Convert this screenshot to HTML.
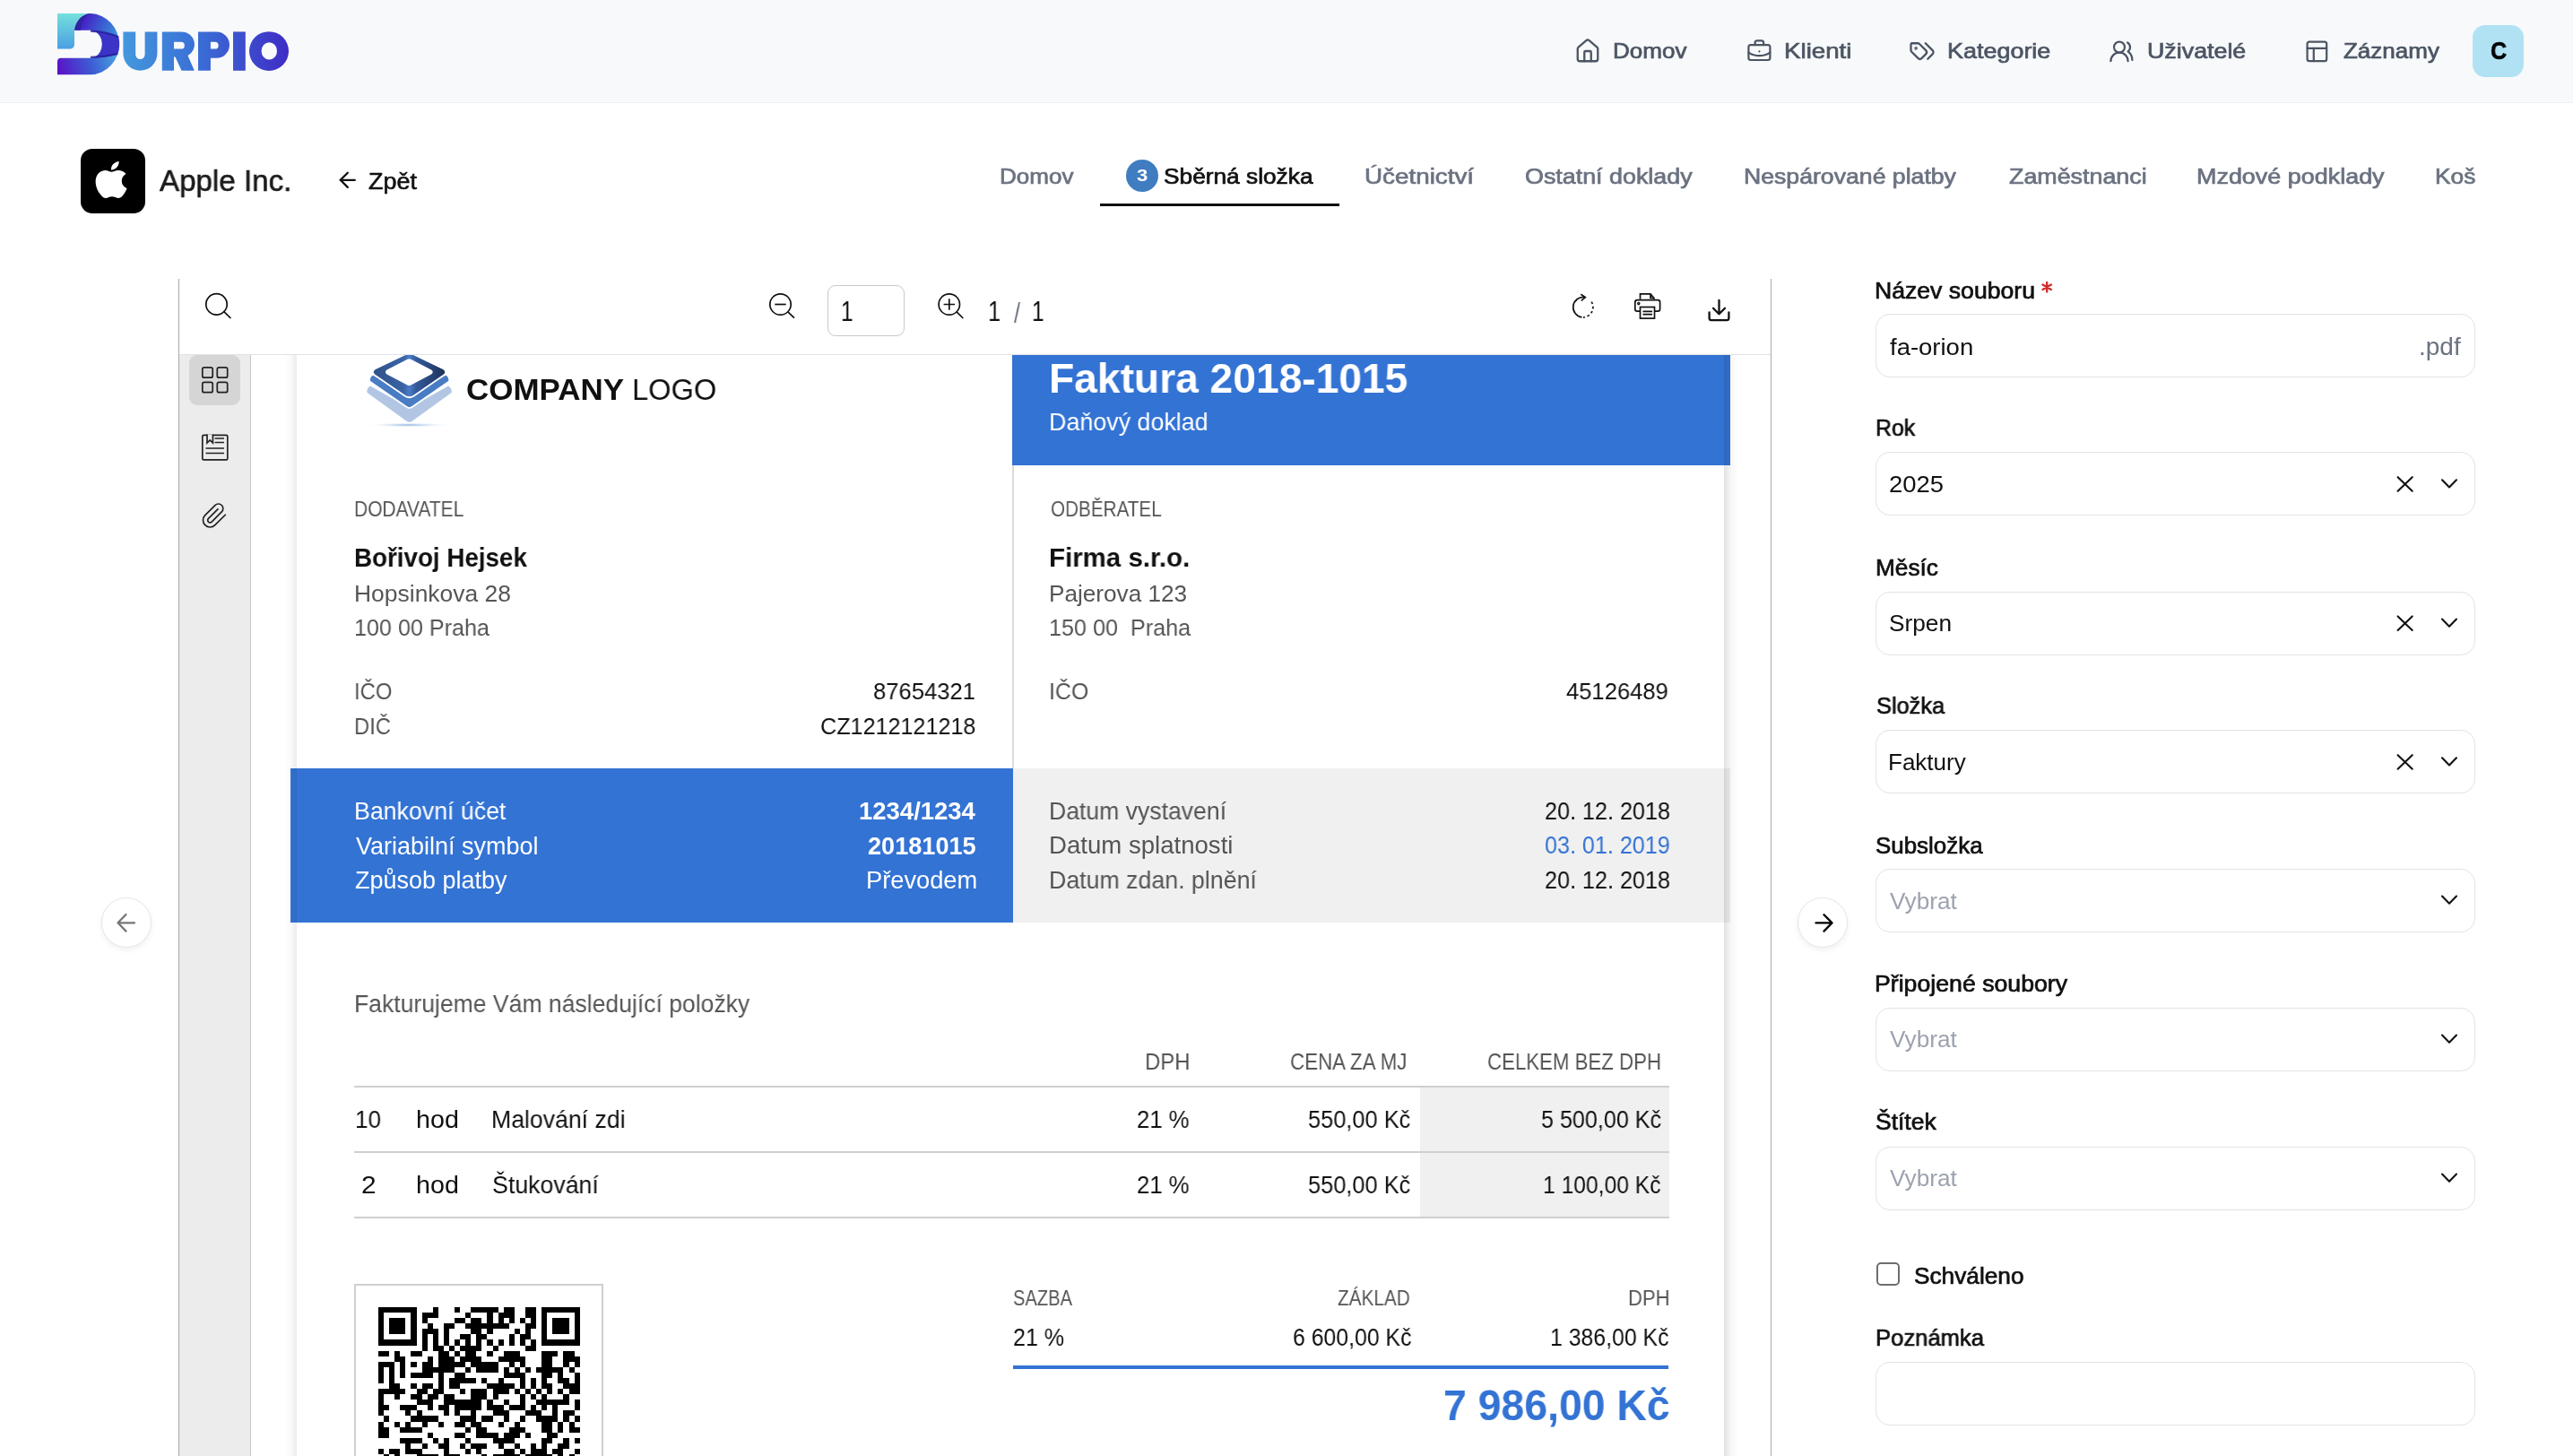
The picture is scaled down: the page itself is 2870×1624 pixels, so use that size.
<!DOCTYPE html>
<html lang="cs">
<head>
<meta charset="utf-8">
<title>Durpio – Sběrná složka</title>
<style>
html,body{margin:0;padding:0;}
body{width:2870px;height:1624px;position:relative;overflow:hidden;background:#fff;font-family:"Liberation Sans",sans-serif;}
.t{position:absolute;white-space:pre;transform-origin:0 0;z-index:4;will-change:transform;}
.abs{position:absolute;}
header.top{position:absolute;left:0;top:0;width:2870px;height:115px;background:#f8f9fb;border-bottom:1px solid #eef0f3;box-sizing:border-box;}
.avatar{position:absolute;left:2758px;top:28px;width:57px;height:58px;border-radius:14px;background:#b1e2f4;}
.applebox{position:absolute;left:90px;top:166px;width:72px;height:72px;border-radius:13px;background:#000;}
.badge{position:absolute;left:1256px;top:178px;width:36px;height:36px;border-radius:50%;background:#3f7cc0;}
.underline{position:absolute;left:1227px;top:227px;width:267px;height:3px;background:#111;}
.viewer{position:absolute;left:199px;top:311px;width:1777px;height:1313px;border-left:1px solid #a9a9a9;border-right:1px solid #a9a9a9;box-sizing:border-box;background:#fff;overflow:hidden;}
.toolbar{position:absolute;left:200px;top:311px;width:1775px;height:85px;background:#fff;border-bottom:1px solid #dfe2e7;box-sizing:border-box;}
.pinput{position:absolute;left:923px;top:318px;width:86px;height:57px;border:1px solid #c9c9c9;border-radius:9px;box-sizing:border-box;background:#fff;}
.sidebar{position:absolute;left:200px;top:396px;width:80px;height:1228px;background:#ececec;border-right:1px solid #c6c6c6;box-sizing:border-box;}
.sbactive{position:absolute;left:211px;top:396px;width:57px;height:56px;border-radius:9px;background:#d5d5d5;}
.page{position:absolute;left:331px;top:396px;width:1592px;height:1228px;background:#fff;}
.shl{position:absolute;left:317px;top:396px;width:14px;height:1228px;background:linear-gradient(to right,rgba(0,0,0,0),rgba(0,0,0,0.02) 50%,rgba(0,0,0,0.075));}
.shr{position:absolute;left:1923px;top:396px;width:16px;height:1228px;background:linear-gradient(to right,rgba(0,0,0,0.115),rgba(0,0,0,0.03) 50%,rgba(0,0,0,0));}
.bluehead{position:absolute;left:1129px;top:396px;width:801px;height:123px;background:#3373d4;}
.bankbox{position:absolute;left:324px;top:857px;width:806px;height:172px;background:#3373d4;}
.datebox{position:absolute;left:1130px;top:857px;width:800px;height:172px;background:#f0f0f0;}
.coldiv{position:absolute;left:1129px;top:519px;width:2px;height:338px;background:#dcdcdc;}
.tline{position:absolute;left:395px;width:1467px;height:2px;background:#cfcfcf;}
.tcell{position:absolute;left:1584px;width:278px;background:#f0f0f0;}
.qrframe{position:absolute;left:395px;top:1432px;width:278px;height:300px;border:2px solid #cfcfcf;box-sizing:border-box;background:#fff;}
.sumline{position:absolute;left:1130px;top:1523px;width:731px;height:4px;background:#3373d4;}
.navcirc{position:absolute;width:56px;height:56px;border-radius:50%;background:#fff;border:1px solid #e6e6e6;box-sizing:border-box;box-shadow:0 3px 6px rgba(0,0,0,0.06);}
.fld{position:absolute;left:2092px;width:669px;height:71px;border:1.5px solid #e1e3e7;border-radius:16px;box-sizing:border-box;background:#fff;}
.chk{position:absolute;left:2093px;top:1408px;width:26px;height:26px;border:2px solid #6e6e6e;border-radius:5px;box-sizing:border-box;background:#fff;}
svg{position:absolute;overflow:visible;}
</style>
</head>
<body>
<header class="top">
  <!-- DURPIO logo -->
  <svg style="left:0;top:0" width="340" height="100" viewBox="0 0 340 100">
    <defs>
      <linearGradient id="lg_txt" gradientUnits="userSpaceOnUse" x1="137" y1="0" x2="322" y2="0">
        <stop offset="0" stop-color="#4398dd"/><stop offset="0.45" stop-color="#3a6fd6"/><stop offset="1" stop-color="#3f2cc5"/>
      </linearGradient>
      <linearGradient id="lg_stem" gradientUnits="userSpaceOnUse" x1="0" y1="15" x2="0" y2="55">
        <stop offset="0" stop-color="#74e0dc"/><stop offset="1" stop-color="#4a9ee2"/>
      </linearGradient>
      <linearGradient id="lg_arc" gradientUnits="userSpaceOnUse" x1="90" y1="22" x2="132" y2="40">
        <stop offset="0" stop-color="#4818c6"/><stop offset="0.55" stop-color="#3a5fd2"/><stop offset="1" stop-color="#3f94dc"/>
      </linearGradient>
      <linearGradient id="lg_dbot" gradientUnits="userSpaceOnUse" x1="64" y1="80" x2="132" y2="60">
        <stop offset="0" stop-color="#5a10c6"/><stop offset="0.55" stop-color="#3c5ed4"/><stop offset="1" stop-color="#4aa8e2"/>
      </linearGradient>
    </defs>
    <path fill="url(#lg_stem)" d="M64 15 H101 C92 16 85 22 83 33.7 V49.6 A5 5 0 0 1 78 54.6 H64 Z"/>
    <path fill="url(#lg_arc)" d="M101 15 A33 34.2 0 0 1 132.9 49.5 H113.7 A13 15.5 0 0 0 101 33.7 H83 C85 22 92 16 101 15 Z"/>
    <path fill="#2b279c" opacity="0.9" d="M83 33.7 C85 22 92 16 101 15 C95 18 90.5 25 90 33.7 Z"/>
    <path fill="url(#lg_dbot)" d="M68 64.7 H101 A13 15.5 0 0 0 113.7 49.5 H132.9 A33 33.8 0 0 1 101 83.3 H64 V68.7 A4 4 0 0 1 68 64.7 Z"/>
    <path fill="#3b34c6" d="M101 33.7 C113 34.2 124 36.5 132.1 40.6 A33 34 0 0 1 131.2 60.8 C122 63.2 112 64.4 101 64.7 A13 15.5 0 0 0 101 33.7 Z"/>
    <path fill="none" stroke="#28219a" stroke-width="2.2" opacity="0.85" d="M101 34.6 C113 35.1 124 37.4 132.1 41.5 M101 63.8 C112 63.5 122 62.3 131.2 59.9"/>
    <g fill="url(#lg_txt)">
      <path d="M137.4 35.4 H151.2 V60.7 A5.2 5.2 0 0 0 161.6 60.7 V35.4 H175.4 V59.8 A19 19 0 0 1 137.4 59.8 Z"/>
      <path fill-rule="evenodd" d="M180.8 35.4 H203 A14 14.1 0 0 1 209.5 62 L216.8 78.8 H202.5 L195.5 63.6 H194 V78.8 H180.8 Z M194 46.7 H201.9 A3.95 3.95 0 0 1 201.9 54.6 H194 Z"/>
      <path fill-rule="evenodd" d="M221 35.4 H241.5 A14.5 14.65 0 0 1 241.5 64.7 H234.9 V78.8 H221 Z M234.9 46.7 H239.7 A3.95 3.95 0 0 1 239.7 54.6 H234.9 Z"/>
      <rect x="260" y="35.4" width="13.8" height="43.4"/>
      <path fill-rule="evenodd" d="M278 57.1 A22 21.9 0 1 0 322 57.1 A22 21.9 0 1 0 278 57.1 Z M291.6 56.9 A8.7 9.6 0 1 0 309 56.9 A8.7 9.6 0 1 0 291.6 56.9 Z"/>
    </g>
  </svg>
  <nav>
    <svg style="left:1755.5px;top:41.8px" width="30" height="30" viewBox="0 0 24 24" fill="none" stroke="#4b5563" stroke-width="1.85" stroke-linecap="round" stroke-linejoin="round"><path d="M15 21v-8a1 1 0 0 0-1-1h-4a1 1 0 0 0-1 1v8"/><path d="M3 10a2 2 0 0 1 .709-1.528l7-5.999a2 2 0 0 1 2.582 0l7 5.999A2 2 0 0 1 21 10v9a2 2 0 0 1-2 2H5a2 2 0 0 1-2-2z"/></svg>
    <svg style="left:1947.9px;top:43.3px" width="28.8" height="28.8" viewBox="0 0 24 24" fill="none" stroke="#4b5563" stroke-width="1.85" stroke-linecap="round" stroke-linejoin="round"><path d="M12 12h.01"/><path d="M16 6V4a2 2 0 0 0-2-2h-4a2 2 0 0 0-2 2v2"/><path d="M22 13a18.15 18.15 0 0 1-20 0"/><rect width="20" height="14" x="2" y="6" rx="2"/></svg>
    <svg style="left:2129.4px;top:42px" width="30" height="30" viewBox="0 0 24 24" fill="none" stroke="#4b5563" stroke-width="1.85" stroke-linecap="round" stroke-linejoin="round"><path d="m15 5 6.3 6.3a2.4 2.4 0 0 1 0 3.4L17 19"/><path d="M9.586 5.586A2 2 0 0 0 8.172 5H3a1 1 0 0 0-1 1v5.172a2 2 0 0 0 .586 1.414L8.29 18.29a2.426 2.426 0 0 0 3.42 0l3.58-3.58a2.426 2.426 0 0 0 0-3.42z"/><circle cx="6.5" cy="9.5" r=".5" fill="#4b5563"/></svg>
    <svg style="left:2352px;top:42.5px" width="28.8" height="28.8" viewBox="0 0 24 24" fill="none" stroke="#4b5563" stroke-width="1.85" stroke-linecap="round" stroke-linejoin="round"><path d="M18 21a8 8 0 0 0-16 0"/><circle cx="10" cy="8" r="5"/><path d="M22 20c0-3.37-2-6.5-4-8a5 5 0 0 0-.45-8.3"/></svg>
    <svg style="left:2570px;top:42.9px" width="28.8" height="28.8" viewBox="0 0 24 24" fill="none" stroke="#4b5563" stroke-width="1.85" stroke-linecap="round" stroke-linejoin="round"><rect width="18" height="18" x="3" y="3" rx="2"/><path d="M3 9h18"/><path d="M9 21V9"/></svg>
    <div class="avatar"></div>
  </nav>
</header>

<section class="clientbar">
  <div class="applebox"></div>
  <svg style="left:108.3px;top:180px" width="31.8" height="41" viewBox="3 0 17.8 24" preserveAspectRatio="none"><path fill="#fff" d="M12.152 6.896c-.948 0-2.415-1.078-3.96-1.04-2.04.027-3.91 1.183-4.961 3.014-2.117 3.675-.546 9.103 1.519 12.09 1.013 1.454 2.208 3.09 3.792 3.039 1.52-.065 2.09-.987 3.935-.987 1.831 0 2.35.987 3.96.948 1.637-.026 2.676-1.48 3.676-2.948 1.156-1.688 1.636-3.325 1.662-3.415-.039-.013-3.182-1.221-3.22-4.857-.026-3.04 2.48-4.494 2.597-4.559-1.429-2.09-3.623-2.324-4.39-2.376-2-.156-3.675 1.09-4.61 1.09zM15.53 3.83c.843-1.012 1.4-2.427 1.245-3.830-1.207.052-2.662.805-3.532 1.818-.78.896-1.454 2.338-1.273 3.714 1.338.104 2.715-.688 3.559-1.701"/></svg>
  <svg style="left:374.2px;top:187.2px" width="27.6" height="27.6" viewBox="0 0 24 24" fill="none" stroke="#111" stroke-width="2" stroke-linecap="round" stroke-linejoin="round"><path d="m12 19-7-7 7-7"/><path d="M19 12H5"/></svg>
  <div class="badge"></div>
  <div class="underline"></div>
</section>

<main>
  <div class="viewer"></div>
  <div class="toolbar" style="z-index:2"></div>
  <!-- toolbar icons -->
  <svg style="left:0;top:0;z-index:3" width="2870" height="400" viewBox="0 0 2870 400" fill="none" stroke="#111" stroke-width="1.7" stroke-linecap="butt">
    <circle cx="241.5" cy="339.4" r="11.7"/><path d="M249.8 347.7 L257.4 355"/>
    <circle cx="870.5" cy="339.5" r="11.7"/><path d="M878.8 347.8 L886 354.7"/><path d="M864.3 339.5 H876.7"/>
    <circle cx="1058.8" cy="339.5" r="11.7"/><path d="M1067.1 347.8 L1074.3 355"/><path d="M1052.6 339.5 H1065 M1058.8 333.3 V345.7"/>
    <path d="M1764.5 353.9 A11.3 11.3 0 0 1 1767.5 331.5"/>
    <path d="M1775.2 336.6 A11.3 11.3 0 0 1 1766 353.9" stroke-dasharray="2.6 2.8"/>
    <path d="M1763.3 328.2 L1768.3 331.6 L1763.8 335.4" stroke-linejoin="miter"/>
    <path d="M1829.5 333.8 V327.8 H1841 L1845 332.5 V333.8 M1841 327.8 V332.5 H1845"/>
    <rect x="1823.8" y="334.6" width="27.8" height="12.6" rx="2.4"/>
    <circle cx="1827.8" cy="338.6" r="1.1" stroke-width="1.4"/>
    <rect x="1829.5" y="342.5" width="16" height="12.6" fill="#fff"/>
    <path d="M1832.5 347.3 H1843 M1832.5 350.6 H1843"/>
    <path d="M1917.5 335 V350 M1911 343.7 L1917.5 350.2 L1924 343.7 M1906.6 348.5 V354.8 A2.4 2.4 0 0 0 1909 357.2 H1926 A2.4 2.4 0 0 0 1928.4 354.8 V348.5" stroke-width="2.3" stroke-linecap="round" stroke-linejoin="round"/>
  </svg>
  <div class="pinput" style="z-index:3"></div>
  <div class="sidebar"></div>
  <div class="sbactive"></div>
  <svg style="left:0;top:0" width="300" height="600" viewBox="0 0 300 600" fill="none" stroke="#222" stroke-width="1.7">
    <rect x="225.8" y="409.8" width="11.4" height="11.4" rx="2"/><rect x="242.3" y="409.8" width="11.4" height="11.4" rx="2"/>
    <rect x="225.8" y="426.3" width="11.4" height="11.4" rx="2"/><rect x="242.3" y="426.3" width="11.4" height="11.4" rx="2"/>
    <rect x="225.8" y="485.3" width="28" height="27.6" rx="1.5"/>
    <path d="M231 484.5 V494 L234.2 491 L237.4 494 V484.5" fill="#ececec"/>
    <path d="M239.5 489 H250 M239.5 493.5 H250 M229.5 500 H250 M229.5 505.5 H250" stroke-width="1.5"/>
    <path transform="translate(223.9 559.4) scale(1.3)" stroke-width="1.3" d="m21.44 11.05-9.19 9.19a6 6 0 0 1-8.49-8.49l8.57-8.57A4 4 0 1 1 18 8.84l-8.59 8.57a2 2 0 0 1-2.83-2.83l8.49-8.48"/>
  </svg>

  <div class="page"></div>
  <!-- company logo -->
  <svg style="left:0;top:0" width="600" height="500" viewBox="0 0 600 500">
    <defs>
      <linearGradient id="lg_top" x1="0" y1="0" x2="1" y2="0"><stop offset="0" stop-color="#2f5088"/><stop offset="0.42" stop-color="#3a64a6"/><stop offset="0.5" stop-color="#4a7cc6"/><stop offset="0.6" stop-color="#34599a"/><stop offset="1" stop-color="#1c3158"/></linearGradient>
      <radialGradient id="lg_sh" cx="0.5" cy="0.5" r="0.5"><stop offset="0" stop-color="#6a9ad8" stop-opacity="0.8"/><stop offset="1" stop-color="#fff" stop-opacity="0"/></radialGradient>
    </defs>
    <ellipse cx="456" cy="474" rx="48" ry="2.6" fill="url(#lg_sh)"/>
    <path fill="#b2c6e4" d="M409.6 438 Q408.6 433 413 430.5 L456.6 455 L500 430.5 Q504.6 433 503.6 438 L460 469.5 Q456.6 472 453.2 469.5 Z"/>
    <path fill="#4a7cc4" stroke="#fff" stroke-width="1.8" d="M412 425.3 Q411.4 420 416 417.5 L456.6 441 L497.2 417.5 Q501.8 420 501.2 425.3 L460 453.8 Q456.6 456.3 453.2 453.8 Z"/>
    <path fill="url(#lg_top)" stroke="#fff" stroke-width="1.8" fill-rule="evenodd" d="M418 411.5 L452 395.2 Q456.6 393 461.2 395.2 L495 411.5 Q499.5 415 495 418.5 L461 442 Q456.6 444.5 452.2 442 L418 418.5 Q413.5 415 418 411.5 Z M432 413.2 Q429.5 415 432 416.8 L454.8 428.6 Q456.4 429.4 458 428.6 L480.6 416.8 Q483.1 415 480.6 413.2 L458 401.6 Q456.4 400.8 454.8 401.6 Z"/>
  </svg>

  <div class="bluehead"></div>
  <div class="coldiv"></div>
  <div class="bankbox"></div>
    <div class="datebox"></div>
    
  <div class="tline" style="top:1211px"></div>
  <div class="tcell" style="top:1213px;height:71px"></div>
  <div class="tline" style="top:1284px"></div>
  <div class="tcell" style="top:1286px;height:71px"></div>
  <div class="tline" style="top:1357px"></div>

  <div class="qrframe"></div>
  <svg style="left:421.6px;top:1457.7px" width="224.7" height="224.7" viewBox="0 0 37 37" shape-rendering="crispEdges"><path fill="#000" d="M0 0h7v1h-7zM10 0h1v1h-1zM14 0h1v1h-1zM17 0h5v1h-5zM23 0h2v1h-2zM27 0h2v1h-2zM30 0h7v1h-7zM0 1h1v1h-1zM6 1h1v1h-1zM8 1h3v1h-3zM16 1h1v1h-1zM20 1h1v1h-1zM22 1h3v1h-3zM27 1h2v1h-2zM30 1h1v1h-1zM36 1h1v1h-1zM0 2h1v1h-1zM2 2h3v1h-3zM6 2h1v1h-1zM8 2h1v1h-1zM14 2h2v1h-2zM17 2h2v1h-2zM20 2h1v1h-1zM22 2h1v1h-1zM24 2h1v1h-1zM26 2h1v1h-1zM28 2h1v1h-1zM30 2h1v1h-1zM32 2h3v1h-3zM36 2h1v1h-1zM0 3h1v1h-1zM2 3h3v1h-3zM6 3h1v1h-1zM9 3h1v1h-1zM12 3h2v1h-2zM16 3h8v1h-8zM27 3h2v1h-2zM30 3h1v1h-1zM32 3h3v1h-3zM36 3h1v1h-1zM0 4h1v1h-1zM2 4h3v1h-3zM6 4h1v1h-1zM8 4h3v1h-3zM12 4h1v1h-1zM17 4h2v1h-2zM20 4h1v1h-1zM25 4h1v1h-1zM27 4h1v1h-1zM30 4h1v1h-1zM32 4h3v1h-3zM36 4h1v1h-1zM0 5h1v1h-1zM6 5h1v1h-1zM8 5h1v1h-1zM10 5h1v1h-1zM12 5h1v1h-1zM15 5h2v1h-2zM18 5h2v1h-2zM24 5h1v1h-1zM26 5h2v1h-2zM30 5h1v1h-1zM36 5h1v1h-1zM0 6h7v1h-7zM8 6h1v1h-1zM10 6h1v1h-1zM12 6h1v1h-1zM14 6h1v1h-1zM16 6h1v1h-1zM18 6h1v1h-1zM20 6h1v1h-1zM22 6h1v1h-1zM24 6h1v1h-1zM26 6h1v1h-1zM28 6h1v1h-1zM30 6h7v1h-7zM8 7h1v1h-1zM10 7h2v1h-2zM13 7h1v1h-1zM15 7h4v1h-4zM21 7h1v1h-1zM27 7h2v1h-2zM0 8h2v1h-2zM3 8h1v1h-1zM6 8h2v1h-2zM11 8h2v1h-2zM14 8h1v1h-1zM16 8h2v1h-2zM20 8h1v1h-1zM23 8h3v1h-3zM30 8h3v1h-3zM34 8h2v1h-2zM3 9h2v1h-2zM9 9h1v1h-1zM11 9h3v1h-3zM15 9h4v1h-4zM22 9h5v1h-5zM30 9h2v1h-2zM34 9h3v1h-3zM0 10h3v1h-3zM4 10h1v1h-1zM6 10h1v1h-1zM8 10h2v1h-2zM11 10h5v1h-5zM17 10h5v1h-5zM24 10h1v1h-1zM26 10h1v1h-1zM30 10h2v1h-2zM34 10h1v1h-1zM36 10h1v1h-1zM0 11h1v1h-1zM2 11h1v1h-1zM4 11h1v1h-1zM8 11h6v1h-6zM16 11h1v1h-1zM18 11h4v1h-4zM23 11h1v1h-1zM25 11h1v1h-1zM27 11h1v1h-1zM29 11h5v1h-5zM35 11h1v1h-1zM0 12h1v1h-1zM2 12h1v1h-1zM4 12h1v1h-1zM6 12h4v1h-4zM11 12h1v1h-1zM14 12h2v1h-2zM23 12h4v1h-4zM30 12h2v1h-2zM33 12h1v1h-1zM36 12h1v1h-1zM0 13h1v1h-1zM2 13h1v1h-1zM11 13h1v1h-1zM13 13h5v1h-5zM19 13h1v1h-1zM22 13h1v1h-1zM26 13h1v1h-1zM28 13h1v1h-1zM30 13h1v1h-1zM33 13h2v1h-2zM36 13h1v1h-1zM2 14h2v1h-2zM6 14h1v1h-1zM8 14h2v1h-2zM11 14h1v1h-1zM13 14h2v1h-2zM20 14h5v1h-5zM26 14h1v1h-1zM28 14h1v1h-1zM30 14h2v1h-2zM34 14h3v1h-3zM0 15h5v1h-5zM7 15h2v1h-2zM10 15h2v1h-2zM15 15h1v1h-1zM17 15h3v1h-3zM21 15h3v1h-3zM25 15h1v1h-1zM27 15h1v1h-1zM29 15h1v1h-1zM31 15h1v1h-1zM33 15h1v1h-1zM35 15h2v1h-2zM0 16h1v1h-1zM3 16h1v1h-1zM6 16h2v1h-2zM9 16h2v1h-2zM12 16h2v1h-2zM17 16h3v1h-3zM21 16h1v1h-1zM26 16h1v1h-1zM28 16h1v1h-1zM30 16h1v1h-1zM34 16h1v1h-1zM0 17h1v1h-1zM7 17h3v1h-3zM12 17h7v1h-7zM20 17h1v1h-1zM23 17h1v1h-1zM26 17h1v1h-1zM29 17h6v1h-6zM36 17h1v1h-1zM0 18h2v1h-2zM4 18h3v1h-3zM9 18h1v1h-1zM11 18h2v1h-2zM14 18h5v1h-5zM20 18h3v1h-3zM24 18h3v1h-3zM28 18h1v1h-1zM30 18h1v1h-1zM32 18h1v1h-1zM36 18h1v1h-1zM0 19h1v1h-1zM5 19h1v1h-1zM7 19h1v1h-1zM12 19h1v1h-1zM14 19h1v1h-1zM17 19h1v1h-1zM21 19h3v1h-3zM27 19h3v1h-3zM32 19h1v1h-1zM34 19h2v1h-2zM1 20h1v1h-1zM6 20h5v1h-5zM15 20h3v1h-3zM19 20h2v1h-2zM23 20h1v1h-1zM26 20h1v1h-1zM29 20h4v1h-4zM34 20h1v1h-1zM36 20h1v1h-1zM0 21h1v1h-1zM3 21h1v1h-1zM5 21h1v1h-1zM8 21h1v1h-1zM11 21h1v1h-1zM14 21h2v1h-2zM17 21h2v1h-2zM22 21h1v1h-1zM25 21h1v1h-1zM30 21h2v1h-2zM33 21h1v1h-1zM35 21h1v1h-1zM0 22h2v1h-2zM4 22h4v1h-4zM16 22h1v1h-1zM18 22h2v1h-2zM24 22h3v1h-3zM30 22h2v1h-2zM33 22h1v1h-1zM35 22h2v1h-2zM0 23h2v1h-2zM9 23h1v1h-1zM14 23h2v1h-2zM18 23h4v1h-4zM23 23h3v1h-3zM27 23h1v1h-1zM31 23h2v1h-2zM4 24h4v1h-4zM10 24h1v1h-1zM12 24h1v1h-1zM16 24h1v1h-1zM21 24h4v1h-4zM30 24h2v1h-2zM34 24h1v1h-1zM36 24h1v1h-1zM5 25h1v1h-1zM8 25h1v1h-1zM11 25h2v1h-2zM15 25h1v1h-1zM17 25h3v1h-3zM22 25h1v1h-1zM25 25h1v1h-1zM28 25h1v1h-1zM30 25h1v1h-1zM33 25h2v1h-2zM0 26h1v1h-1zM2 26h2v1h-2zM5 26h3v1h-3zM12 26h1v1h-1zM16 26h1v1h-1zM18 26h1v1h-1zM23 26h2v1h-2zM26 26h1v1h-1zM28 26h3v1h-3zM32 26h2v1h-2zM36 26h1v1h-1zM1 27h1v1h-1zM3 27h1v1h-1zM7 27h4v1h-4zM12 27h3v1h-3zM19 27h1v1h-1zM21 27h5v1h-5zM27 27h5v1h-5zM33 27h1v1h-1zM35 27h1v1h-1z"/></svg>
  <div class="sumline"></div>
  <div class="shl"></div>
  <div class="shr"></div>

  <div class="navcirc" style="left:112.5px;top:1001px"></div>
  <svg style="left:0;top:980px" width="200" height="100" viewBox="0 980 200 100" fill="none" stroke="#767676" stroke-width="2.3" stroke-linecap="round" stroke-linejoin="round"><path d="M140.5 1020 L131.5 1029.3 L140.5 1038.6 M131.5 1029.3 H150"/></svg>
  <div class="navcirc" style="left:2005px;top:1001px"></div>
  <svg style="left:1900px;top:980px" width="200" height="100" viewBox="1900 980 200 100" fill="none" stroke="#000" stroke-width="2.3" stroke-linecap="round" stroke-linejoin="round"><path d="M2034.5 1020.2 L2043.5 1029.4 L2034.5 1038.6 M2025.5 1029.4 H2043.5"/></svg>
</main>

<aside class="form">
  <div class="fld" style="top:349.5px"></div>
  <div class="fld" style="top:504.3px"></div>
  <div class="fld" style="top:659.5px"></div>
  <div class="fld" style="top:814.3px"></div>
  <div class="fld" style="top:968.5px"></div>
  <div class="fld" style="top:1123.5px"></div>
  <div class="fld" style="top:1278.6px"></div>
  <div class="fld" style="top:1519.4px"></div>
  <div class="chk"></div>
  <svg style="left:0;top:0" width="2870" height="1400" viewBox="0 0 2870 1400" fill="none" stroke="#111" stroke-width="2.1" stroke-linecap="round" stroke-linejoin="round">
    <path d="M2283.2 314.8 V325.6 M2278.5 317.5 L2287.9 322.9 M2278.5 322.9 L2287.9 317.5" stroke="#d02a2a" stroke-width="2.3"/>
    <path d="M2674.6 532.2 L2690.7 547.7 M2690.7 532.2 L2674.6 547.7"/>
    <path d="M2724 535.3 L2732 543.5 L2740 535.3"/>
    <path d="M2674.6 687.4 L2690.7 702.9 M2690.7 687.4 L2674.6 702.9"/>
    <path d="M2724 690.5 L2732 698.7 L2740 690.5"/>
    <path d="M2674.6 842.2 L2690.7 857.7 M2690.7 842.2 L2674.6 857.7"/>
    <path d="M2724 845.3 L2732 853.5 L2740 845.3"/>
    <path d="M2724 999.5 L2732 1007.7 L2740 999.5"/>
    <path d="M2724 1154.5 L2732 1162.7 L2740 1154.5"/>
    <path d="M2724 1309.6 L2732 1317.8 L2740 1309.6"/>
  </svg>
</aside>
<span class="t" style="left:1799.21px;top:43.20px;font-size:24.27px;line-height:27px;color:#4b5563;transform:scaleX(1.0737);-webkit-text-stroke:0.7px currentColor;">Domov</span>
<span class="t" style="left:1990.08px;top:43.20px;font-size:24.27px;line-height:27px;color:#4b5563;transform:scaleX(1.1414);-webkit-text-stroke:0.7px currentColor;">Klienti</span>
<span class="t" style="left:2172.14px;top:43.20px;font-size:24.27px;line-height:27px;color:#4b5563;transform:scaleX(1.1101);-webkit-text-stroke:0.7px currentColor;">Kategorie</span>
<span class="t" style="left:2395.28px;top:43.20px;font-size:24.27px;line-height:27px;color:#4b5563;transform:scaleX(1.1048);-webkit-text-stroke:0.7px currentColor;">Uživatelé</span>
<span class="t" style="left:2614.32px;top:43.20px;font-size:24.27px;line-height:27px;color:#4b5563;transform:scaleX(1.0710);-webkit-text-stroke:0.7px currentColor;">Záznamy</span>
<span class="t" style="left:2777.77px;top:42.10px;font-size:26.74px;line-height:30px;color:#000;font-weight:700;transform:scaleX(0.9383);-webkit-text-stroke:0.6px currentColor;">C</span>
<span class="t" style="left:177.84px;top:182.30px;font-size:34.01px;line-height:38px;color:#1a1a1a;transform:scaleX(0.9748);-webkit-text-stroke:0.6px currentColor;">Apple Inc.</span>
<span class="t" style="left:411.44px;top:187.70px;font-size:25.29px;line-height:28px;color:#111;transform:scaleX(1.0665);-webkit-text-stroke:0.6px currentColor;">Zpět</span>
<span class="t" style="left:1114.91px;top:182.90px;font-size:23.98px;line-height:27px;color:#6b7280;transform:scaleX(1.0857);-webkit-text-stroke:0.7px currentColor;">Domov</span>
<span class="t" style="left:1298.16px;top:182.90px;font-size:23.98px;line-height:27px;color:#111111;transform:scaleX(1.0962);-webkit-text-stroke:0.7px currentColor;">Sběrná složka</span>
<span class="t" style="left:1521.70px;top:182.90px;font-size:23.98px;line-height:27px;color:#6b7280;transform:scaleX(1.1602);-webkit-text-stroke:0.7px currentColor;">Účetnictví</span>
<span class="t" style="left:1701.08px;top:182.90px;font-size:23.98px;line-height:27px;color:#6b7280;transform:scaleX(1.1206);-webkit-text-stroke:0.7px currentColor;">Ostatní doklady</span>
<span class="t" style="left:1944.76px;top:182.90px;font-size:23.98px;line-height:27px;color:#6b7280;transform:scaleX(1.1114);-webkit-text-stroke:0.7px currentColor;">Nespárované platby</span>
<span class="t" style="left:2240.50px;top:182.90px;font-size:23.98px;line-height:27px;color:#6b7280;transform:scaleX(1.1199);-webkit-text-stroke:0.7px currentColor;">Zaměstnanci</span>
<span class="t" style="left:2449.84px;top:182.90px;font-size:23.98px;line-height:27px;color:#6b7280;transform:scaleX(1.1235);-webkit-text-stroke:0.7px currentColor;">Mzdové podklady</span>
<span class="t" style="left:2716.19px;top:182.90px;font-size:23.98px;line-height:27px;color:#6b7280;transform:scaleX(1.0996);-webkit-text-stroke:0.7px currentColor;">Koš</span>
<span class="t" style="left:1267.99px;top:185.00px;font-size:18.9px;line-height:21px;color:#fff;font-weight:700;transform:scaleX(1.1715);">3</span>
<span class="t" style="left:937.64px;top:329.80px;font-size:30.52px;line-height:34px;color:#111;transform:scaleX(0.7981);">1</span>
<span class="t" style="left:1102.06px;top:329.80px;font-size:30.52px;line-height:34px;color:#111;transform:scaleX(0.8361);">1</span>
<span class="t" style="left:1131.00px;top:331.00px;font-size:31.98px;line-height:36px;color:#6b7280;transform:scaleX(0.7881);">/</span>
<span class="t" style="left:1151.14px;top:329.80px;font-size:30.52px;line-height:34px;color:#111;transform:scaleX(0.7981);">1</span>
<span class="t" style="left:519.57px;top:415.20px;font-size:33.72px;line-height:38px;color:#111;font-weight:700;transform:scaleX(1.0362);">COMPANY</span>
<span class="t" style="left:704.82px;top:415.20px;font-size:33.72px;line-height:38px;color:#111;transform:scaleX(0.9672);">LOGO</span>
<span class="t" style="left:1169.51px;top:395.70px;font-size:46.37px;line-height:52px;color:#fff;font-weight:700;transform:scaleX(0.9956);">Faktura 2018-1015</span>
<span class="t" style="left:1170.10px;top:455.00px;font-size:27.91px;line-height:31px;color:#fff;transform:scaleX(0.9622);">Daňový doklad</span>
<span class="t" style="left:394.88px;top:554.80px;font-size:23.4px;line-height:26px;color:#555555;transform:scaleX(0.8963);">DODAVATEL</span>
<span class="t" style="left:395.14px;top:605.00px;font-size:29.8px;line-height:33px;color:#111111;font-weight:700;transform:scaleX(0.9315);">Bořivoj Hejsek</span>
<span class="t" style="left:394.83px;top:646.60px;font-size:26.16px;line-height:30px;color:#555555;transform:scaleX(1.0115);">Hopsinkova 28</span>
<span class="t" style="left:395.09px;top:685.00px;font-size:26.16px;line-height:30px;color:#555555;transform:scaleX(0.9608);">100 00 Praha</span>
<span class="t" style="left:394.80px;top:756.00px;font-size:26.16px;line-height:30px;color:#555555;transform:scaleX(0.9105);">IČO</span>
<span class="t" style="left:973.89px;top:756.00px;font-size:26.16px;line-height:30px;color:#111111;transform:scaleX(0.9793);">87654321</span>
<span class="t" style="left:395.05px;top:794.60px;font-size:26.16px;line-height:30px;color:#555555;transform:scaleX(0.9069);">DIČ</span>
<span class="t" style="left:914.72px;top:794.60px;font-size:26.16px;line-height:30px;color:#111111;transform:scaleX(0.9614);">CZ1212121218</span>
<span class="t" style="left:1171.52px;top:554.80px;font-size:23.4px;line-height:26px;color:#555555;transform:scaleX(0.8837);">ODBĚRATEL</span>
<span class="t" style="left:1170.33px;top:605.00px;font-size:29.8px;line-height:33px;color:#111111;font-weight:700;transform:scaleX(0.9888);">Firma s.r.o.</span>
<span class="t" style="left:1170.16px;top:646.50px;font-size:26.16px;line-height:30px;color:#555555;">Pajerova 123</span>
<span class="t" style="left:1170.38px;top:685.00px;font-size:26.16px;line-height:30px;color:#555555;transform:scaleX(0.9622);">150 00  Praha</span>
<span class="t" style="left:1170.01px;top:755.70px;font-size:26.16px;line-height:30px;color:#555555;transform:scaleX(0.9501);">IČO</span>
<span class="t" style="left:1747.41px;top:755.70px;font-size:26.16px;line-height:30px;color:#111111;transform:scaleX(0.9779);">45126489</span>
<span class="t" style="left:394.81px;top:890.00px;font-size:26.89px;line-height:30px;color:#fff;transform:scaleX(0.9946);">Bankovní účet</span>
<span class="t" style="left:396.88px;top:928.50px;font-size:26.89px;line-height:30px;color:#fff;transform:scaleX(1.0044);">Variabilní symbol</span>
<span class="t" style="left:396.14px;top:967.20px;font-size:26.89px;line-height:30px;color:#fff;transform:scaleX(1.0041);">Způsob platby</span>
<span class="t" style="left:958.27px;top:890.00px;font-size:26.89px;line-height:30px;color:#fff;font-weight:700;transform:scaleX(1.0224);">1234/1234</span>
<span class="t" style="left:968.06px;top:928.50px;font-size:26.89px;line-height:30px;color:#fff;font-weight:700;transform:scaleX(1.0094);">20181015</span>
<span class="t" style="left:965.56px;top:967.20px;font-size:26.89px;line-height:30px;color:#fff;transform:scaleX(1.0143);">Převodem</span>
<span class="t" style="left:1170.12px;top:889.70px;font-size:26.89px;line-height:30px;color:#555555;transform:scaleX(0.9893);">Datum vystavení</span>
<span class="t" style="left:1170.04px;top:928.30px;font-size:26.89px;line-height:30px;color:#555555;transform:scaleX(1.0263);">Datum splatnosti</span>
<span class="t" style="left:1170.11px;top:966.90px;font-size:26.89px;line-height:30px;color:#555555;transform:scaleX(0.9947);">Datum zdan. plnění</span>
<span class="t" style="left:1722.73px;top:889.70px;font-size:26.89px;line-height:30px;color:#111111;transform:scaleX(0.9366);">20. 12. 2018</span>
<span class="t" style="left:1723.02px;top:928.30px;font-size:26.89px;line-height:30px;color:#3373d4;transform:scaleX(0.9353);">03. 01. 2019</span>
<span class="t" style="left:1722.73px;top:966.90px;font-size:26.89px;line-height:30px;color:#111111;transform:scaleX(0.9366);">20. 12. 2018</span>
<span class="t" style="left:394.82px;top:1103.80px;font-size:27.62px;line-height:31px;color:#555555;transform:scaleX(0.9616);">Fakturujeme Vám následující položky</span>
<span class="t" style="left:1276.54px;top:1169.80px;font-size:25.87px;line-height:28px;color:#555555;transform:scaleX(0.9232);">DPH</span>
<span class="t" style="left:1438.87px;top:1169.80px;font-size:25.87px;line-height:28px;color:#555555;transform:scaleX(0.8638);">CENA ZA MJ</span>
<span class="t" style="left:1658.87px;top:1169.80px;font-size:25.87px;line-height:28px;color:#555555;transform:scaleX(0.8597);">CELKEM BEZ DPH</span>
<span class="t" style="left:396.01px;top:1233.90px;font-size:26.89px;line-height:30px;color:#111111;transform:scaleX(0.9703);">10</span>
<span class="t" style="left:464.01px;top:1233.90px;font-size:26.89px;line-height:30px;color:#111111;transform:scaleX(1.0669);">hod</span>
<span class="t" style="left:548.31px;top:1233.90px;font-size:26.89px;line-height:30px;color:#111111;transform:scaleX(0.9908);">Malování zdi</span>
<span class="t" style="left:1268.31px;top:1233.90px;font-size:26.89px;line-height:30px;color:#111111;transform:scaleX(0.9568);">21 %</span>
<span class="t" style="left:1458.98px;top:1233.90px;font-size:26.89px;line-height:30px;color:#111111;transform:scaleX(0.9443);">550,00 Kč</span>
<span class="t" style="left:1718.59px;top:1233.90px;font-size:26.89px;line-height:30px;color:#111111;transform:scaleX(0.9347);">5 500,00 Kč</span>
<span class="t" style="left:402.50px;top:1307.00px;font-size:26.89px;line-height:30px;color:#111111;transform:scaleX(1.1109);">2</span>
<span class="t" style="left:464.01px;top:1307.00px;font-size:26.89px;line-height:30px;color:#111111;transform:scaleX(1.0669);">hod</span>
<span class="t" style="left:549.29px;top:1307.00px;font-size:26.89px;line-height:30px;color:#111111;transform:scaleX(0.9943);">Štukování</span>
<span class="t" style="left:1268.31px;top:1307.00px;font-size:26.89px;line-height:30px;color:#111111;transform:scaleX(0.9568);">21 %</span>
<span class="t" style="left:1458.98px;top:1307.00px;font-size:26.89px;line-height:30px;color:#111111;transform:scaleX(0.9443);">550,00 Kč</span>
<span class="t" style="left:1721.12px;top:1307.00px;font-size:26.89px;line-height:30px;color:#111111;transform:scaleX(0.9169);">1 100,00 Kč</span>
<span class="t" style="left:1130.09px;top:1435.00px;font-size:23.26px;line-height:26px;color:#555555;transform:scaleX(0.8652);">SAZBA</span>
<span class="t" style="left:1492.34px;top:1435.00px;font-size:23.26px;line-height:26px;color:#555555;transform:scaleX(0.8917);">ZÁKLAD</span>
<span class="t" style="left:1815.89px;top:1435.00px;font-size:23.26px;line-height:26px;color:#555555;transform:scaleX(0.9496);">DPH</span>
<span class="t" style="left:1129.74px;top:1476.60px;font-size:26.89px;line-height:30px;color:#111111;transform:scaleX(0.9331);">21 %</span>
<span class="t" style="left:1441.74px;top:1476.60px;font-size:26.89px;line-height:30px;color:#111111;transform:scaleX(0.9238);">6 600,00 Kč</span>
<span class="t" style="left:1729.11px;top:1476.60px;font-size:26.89px;line-height:30px;color:#111111;transform:scaleX(0.9240);">1 386,00 Kč</span>
<span class="t" style="left:1609.71px;top:1540.40px;font-size:48.26px;line-height:54px;color:#3373d4;font-weight:700;transform:scaleX(0.9610);">7 986,00 Kč</span>
<span class="t" style="left:2091.47px;top:309.60px;font-size:25.87px;line-height:28px;color:#111111;transform:scaleX(1.0289);-webkit-text-stroke:0.7px currentColor;">Název souboru</span>
<span class="t" style="left:2091.61px;top:463.40px;font-size:25.87px;line-height:28px;color:#111111;transform:scaleX(0.9612);-webkit-text-stroke:0.7px currentColor;">Rok</span>
<span class="t" style="left:2091.50px;top:618.70px;font-size:25.87px;line-height:28px;color:#111111;transform:scaleX(1.0127);-webkit-text-stroke:0.7px currentColor;">Měsíc</span>
<span class="t" style="left:2092.50px;top:773.40px;font-size:25.87px;line-height:28px;color:#111111;transform:scaleX(0.9811);-webkit-text-stroke:0.7px currentColor;">Složka</span>
<span class="t" style="left:2092.47px;top:928.80px;font-size:25.87px;line-height:28px;color:#111111;transform:scaleX(1.0022);-webkit-text-stroke:0.7px currentColor;">Subsložka</span>
<span class="t" style="left:2091.46px;top:1082.60px;font-size:25.87px;line-height:28px;color:#111111;transform:scaleX(1.0317);-webkit-text-stroke:0.7px currentColor;">Připojené soubory</span>
<span class="t" style="left:2092.45px;top:1237.30px;font-size:25.87px;line-height:28px;color:#111111;transform:scaleX(1.0235);-webkit-text-stroke:0.7px currentColor;">Štítek</span>
<span class="t" style="left:2091.55px;top:1478.40px;font-size:25.87px;line-height:28px;color:#111111;transform:scaleX(0.9904);-webkit-text-stroke:0.7px currentColor;">Poznámka</span>
<span class="t" style="left:2108.11px;top:371.80px;font-size:26.02px;line-height:30px;color:#111;transform:scaleX(1.0563);">fa-orion</span>
<span class="t" style="left:2698.24px;top:371.80px;font-size:26.89px;line-height:30px;color:#6b7280;transform:scaleX(1.0422);">.pdf</span>
<span class="t" style="left:2107.12px;top:524.80px;font-size:26.02px;line-height:30px;color:#111;transform:scaleX(1.0546);">2025</span>
<span class="t" style="left:2107.31px;top:680.00px;font-size:26.02px;line-height:30px;color:#111;transform:scaleX(1.0083);">Srpen</span>
<span class="t" style="left:2106.37px;top:834.80px;font-size:26.02px;line-height:30px;color:#111;">Faktury</span>
<span class="t" style="left:2108.38px;top:989.60px;font-size:26.02px;line-height:30px;color:#9ca3af;transform:scaleX(1.0079);">Vybrat</span>
<span class="t" style="left:2108.38px;top:1144.40px;font-size:26.02px;line-height:30px;color:#9ca3af;transform:scaleX(1.0079);">Vybrat</span>
<span class="t" style="left:2108.38px;top:1299.00px;font-size:26.02px;line-height:30px;color:#9ca3af;transform:scaleX(1.0079);">Vybrat</span>
<span class="t" style="left:2134.86px;top:1408.50px;font-size:25.73px;line-height:28px;color:#111;transform:scaleX(1.0199);-webkit-text-stroke:0.7px currentColor;">Schváleno</span>

</body>
</html>
